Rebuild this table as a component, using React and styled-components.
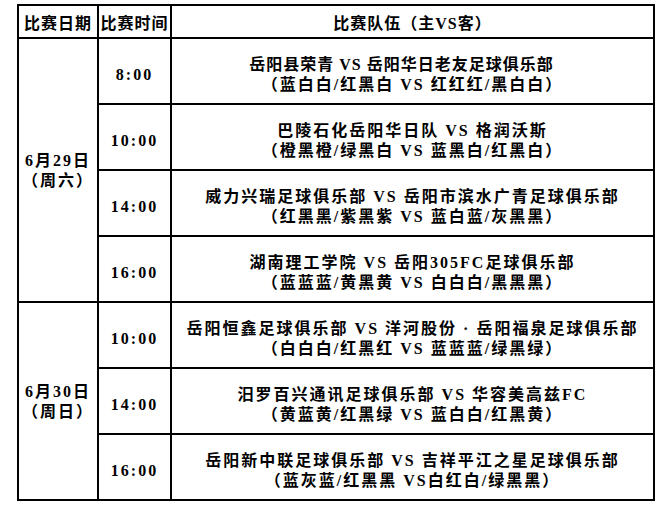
import React from 'react'
import styled, { createGlobalStyle } from 'styled-components'

const GlobalStyle = createGlobalStyle`
  html, body {
    margin: 0;
    padding: 0;
    background: #fff;
  }
`

const days = [
  {
    date: '6月29日',
    week: '（周六）',
    matches: [
      { time: '8:00', teams: '岳阳县荣青 VS 岳阳华日老友足球俱乐部', colors: '（蓝白白/红黑白 VS 红红红/黑白白）', tight: true },
      { time: '10:00', teams: '巴陵石化岳阳华日队 VS 格润沃斯', colors: '（橙黑橙/绿黑白 VS 蓝黑白/红黑白）' },
      { time: '14:00', teams: '威力兴瑞足球俱乐部 VS 岳阳市滨水广青足球俱乐部', colors: '（红黑黑/紫黑紫 VS 蓝白蓝/灰黑黑）' },
      { time: '16:00', teams: '湖南理工学院 VS 岳阳305FC足球俱乐部', colors: '（蓝蓝蓝/黄黑黄 VS 白白白/黑黑黑）' }
    ]
  },
  {
    date: '6月30日',
    week: '（周日）',
    matches: [
      { time: '10:00', teams: '岳阳恒鑫足球俱乐部 VS 洋河股份 · 岳阳福泉足球俱乐部', colors: '（白白白/红黑红 VS 蓝蓝蓝/绿黑绿）' },
      { time: '14:00', teams: '汨罗百兴通讯足球俱乐部 VS 华容美高兹FC', colors: '（黄蓝黄/红黑绿 VS 蓝白白/红黑黄）' },
      { time: '16:00', teams: '岳阳新中联足球俱乐部 VS 吉祥平江之星足球俱乐部', colors: '（蓝灰蓝/红黑黑 VS白红白/绿黑黑）' }
    ]
  }
]

const Page = styled.div`
  padding: 4px 0 0 17px;
`

const Schedule = styled.div`
  display: grid;
  grid-template-columns: 78px 71px 481px;
  grid-template-rows: 31px repeat(7, 64px);
  gap: 2px;
  padding: 2px;
  width: max-content;
  background: #000;
  font-family: "Liberation Serif", "Noto Sans CJK SC", serif;
  font-weight: 700;
  font-size: 16px;
  letter-spacing: 2px;
  color: #000;
`

const Cell = styled.div`
  display: flex;
  flex-direction: column;
  align-items: center;
  justify-content: center;
  box-sizing: border-box;
  padding-top: ${({ shift }) => shift || 0}px;
  background: #fff;
  line-height: 20px;
  text-align: center;
  white-space: nowrap;
  grid-row: ${({ span }) => (span ? `span ${span}` : 'auto')};
`

const HeadCell = styled(Cell)`
  letter-spacing: 1px;
`

const DateCell = styled(Cell)`
  grid-column: 1;
`

const Line = styled.span`
  display: block;
  letter-spacing: ${({ tight }) => (tight ? '1px' : 'inherit')};
  margin-right: ${({ tight }) => (tight ? '22px' : '0')};
`

export default function App () {
  return (
    <Page>
      <GlobalStyle />
      <Schedule>
        <HeadCell shift={4}>比赛日期</HeadCell>
        <HeadCell shift={4}>比赛时间</HeadCell>
        <HeadCell shift={4}>比赛队伍（主VS客）</HeadCell>
        {days.map((day) => (
          <React.Fragment key={day.date}>
            <DateCell span={day.matches.length} shift={2}>
              <Line>{day.date}</Line>
              <Line>{day.week}</Line>
            </DateCell>
            {day.matches.map((m) => (
              <React.Fragment key={m.time + m.teams}>
                <Cell shift={7}>{m.time}</Cell>
                <Cell shift={7}>
                  <Line tight={m.tight}>{m.teams}</Line>
                  <Line>{m.colors}</Line>
                </Cell>
              </React.Fragment>
            ))}
          </React.Fragment>
        ))}
      </Schedule>
    </Page>
  )
}
